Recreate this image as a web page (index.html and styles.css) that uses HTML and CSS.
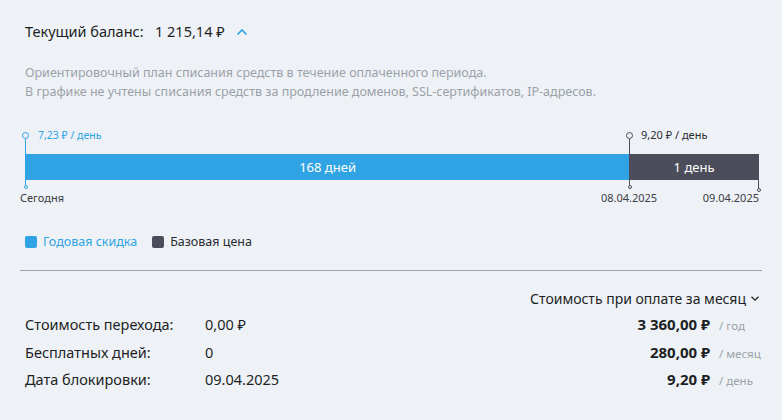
FILE: index.html
```html
<!DOCTYPE html>
<html lang="ru">
<head>
<meta charset="utf-8">
<link rel="stylesheet" href="styles.css">
</head>
<body>
<div class="page">
  <div class="balance">
    <span class="balance-label">Текущий баланс:</span>
    <span class="balance-value">1 215,14 ₽</span>
    <svg class="chev-up" width="12" height="8" viewBox="0 0 12 8"><path d="M1.5 6.5 L6 2 L10.5 6.5" fill="none" stroke="#2fa3e3" stroke-width="1.6"/></svg>
  </div>
  <p class="desc">Ориентировочный план списания средств в течение оплаченного периода.<br>В графике не учтены списания средств за продление доменов, SSL-сертификатов, IP-адресов.</p>

  <div class="chart">
    <div class="rates">
      <span class="rate rate-blue">7,23 ₽ / день</span>
      <span class="rate rate-dark" style="left: 82.29%">9,20 ₽ / день</span>
    </div>
    <div class="bar">
      <div class="seg seg-blue" style="flex: 604">168 дней</div>
      <div class="seg seg-dark" style="flex: 130">1 день</div>
    </div>
    <div class="dates">
      <span class="date date-start">Сегодня</span>
      <span class="date date-mid" style="left: 82.29%">08.04.2025</span>
      <span class="date date-end">09.04.2025</span>
    </div>
    <div class="marker marker-start"><span class="ring"></span><span class="stem"></span><span class="dot"></span></div>
    <div class="marker marker-mid" style="left: 82.29%"><span class="ring"></span><span class="stem"></span><span class="dot"></span></div>
    <div class="marker marker-end"><span class="stem"></span><span class="dot"></span></div>
  </div>

  <div class="legend">
    <span class="legend-item legend-blue"><span class="sw sw-blue"></span>Годовая скидка</span>
    <span class="legend-item"><span class="sw sw-dark"></span>Базовая цена</span>
  </div>

  <hr class="divider">

  <div class="period">
    <span>Стоимость при оплате за месяц</span>
    <svg width="10" height="7" viewBox="0 0 10 7"><path d="M1.5 1.8 L5 5.2 L8.5 1.8" fill="none" stroke="#222" stroke-width="1.3"/></svg>
  </div>

  <div class="details">
    <div class="row"><span class="k">Стоимость перехода:</span><span class="v">0,00 ₽</span><span class="price">3 360,00 ₽</span><span class="unit">/ год</span></div>
    <div class="row"><span class="k">Бесплатных дней:</span><span class="v">0</span><span class="price">280,00 ₽</span><span class="unit">/ месяц</span></div>
    <div class="row"><span class="k">Дата блокировки:</span><span class="v">09.04.2025</span><span class="price">9,20 ₽</span><span class="unit">/ день</span></div>
  </div>
</div>
</body>
</html>
```
FILE: styles.css
```css
* { box-sizing: border-box; }
html, body { margin: 0; }
body {
  background: #eef2f6;
  font-family: "Noto Sans", "Open Sans", sans-serif;
  color: #1d1f24;
}
.page {
  padding: 20px 20px 0 20px;
  width: 782px;
}
.balance {
  display: flex;
  align-items: center;
  padding-left: 5px;
  font-size: 14.5px;
  height: 22px;
}
.balance-label { width: 130px; }
.balance-value { margin-right: 11px; }
.chev-up { margin-top: 1px; }
.desc {
  margin: 21px 0 0 0;
  padding-left: 5px;
  font-size: 12.5px;
  line-height: 19px;
  color: #9ba1a9;
}
.chart {
  position: relative;
  margin: 25px 3px 0 5px;
  height: 80px;
}
.rates {
  position: relative;
  height: 28px;
}
.rate {
  position: absolute;
  top: 2px;
  font-size: 10.5px;
  white-space: nowrap;
}
.rate-blue { left: 13px; color: #2fa3e3; }
.rate-dark { margin-left: 12px; color: #2a2c33; font-size: 11px; top: 1px; }
.bar {
  display: flex;
  height: 26px;
  padding-left: 1px;
}
.seg {
  display: flex;
  align-items: center;
  justify-content: center;
  color: #fff;
  font-size: 13px;
}
.seg-blue { background: #2fa3e3; }
.seg-dark { background: #4b4d5b; }
.dates {
  position: relative;
  height: 26px;
  font-size: 11px;
  color: #3a3d45;
}
.date { position: absolute; top: 10px; white-space: nowrap; }
.date-start { left: -5px; }
.date-mid { transform: translateX(-50%); }
.date-end { right: 0; }
.marker {
  position: absolute;
  top: 6px;
  width: 0;
  display: flex;
  flex-direction: column;
  align-items: center;
}
.marker-start { left: 0.5px; }
.marker-mid { margin-left: 0.5px; }
.marker-end { right: 0.5px; top: 54px; }
.marker .ring {
  width: 7px;
  height: 7px;
  border: 1px solid currentColor;
  border-radius: 50%;
  flex: none;
}
.marker .stem {
  width: 1px;
  height: 46px;
  background: currentColor;
  flex: none;
}
.marker-end .stem { height: 8px; }
.marker .dot {
  width: 4px;
  height: 4px;
  border: 1px solid currentColor;
  border-radius: 50%;
  flex: none;
}
.marker-start { color: #2fa3e3; }
.marker-mid, .marker-end { color: #4b4d5b; }
.legend {
  display: flex;
  gap: 15px;
  padding-left: 5px;
  margin-top: 27px;
  font-size: 12.5px;
  color: #2a2c33;
}
.legend-item { display: flex; align-items: center; gap: 6px; }
.legend-blue { color: #2fa3e3; }
.sw { width: 12px; height: 12px; border-radius: 2px; }
.sw-blue { background: #2fa3e3; }
.sw-dark { background: #4b4d5b; }
.divider {
  margin: 20px 0 0 0;
  border: 0;
  border-top: 1px solid #9ea3aa;
}
.period {
  display: flex;
  justify-content: flex-end;
  align-items: center;
  gap: 4px;
  margin-top: 18px;
  padding-right: 2px;
  font-size: 14px;
  color: #1d1f24;
}
.details {
  margin-top: 6px;
  padding-left: 5px;
  padding-right: 2px;
}
.row {
  display: flex;
  align-items: baseline;
  height: 27.5px;
  font-size: 14.5px;
}
.k { width: 180px; }
.v { flex: 1; }
.price { font-weight: 700; font-size: 15px; white-space: nowrap; }
.unit { width: 50px; padding-left: 9px; font-size: 11.5px; color: #9ba1a9; white-space: nowrap; }
```
